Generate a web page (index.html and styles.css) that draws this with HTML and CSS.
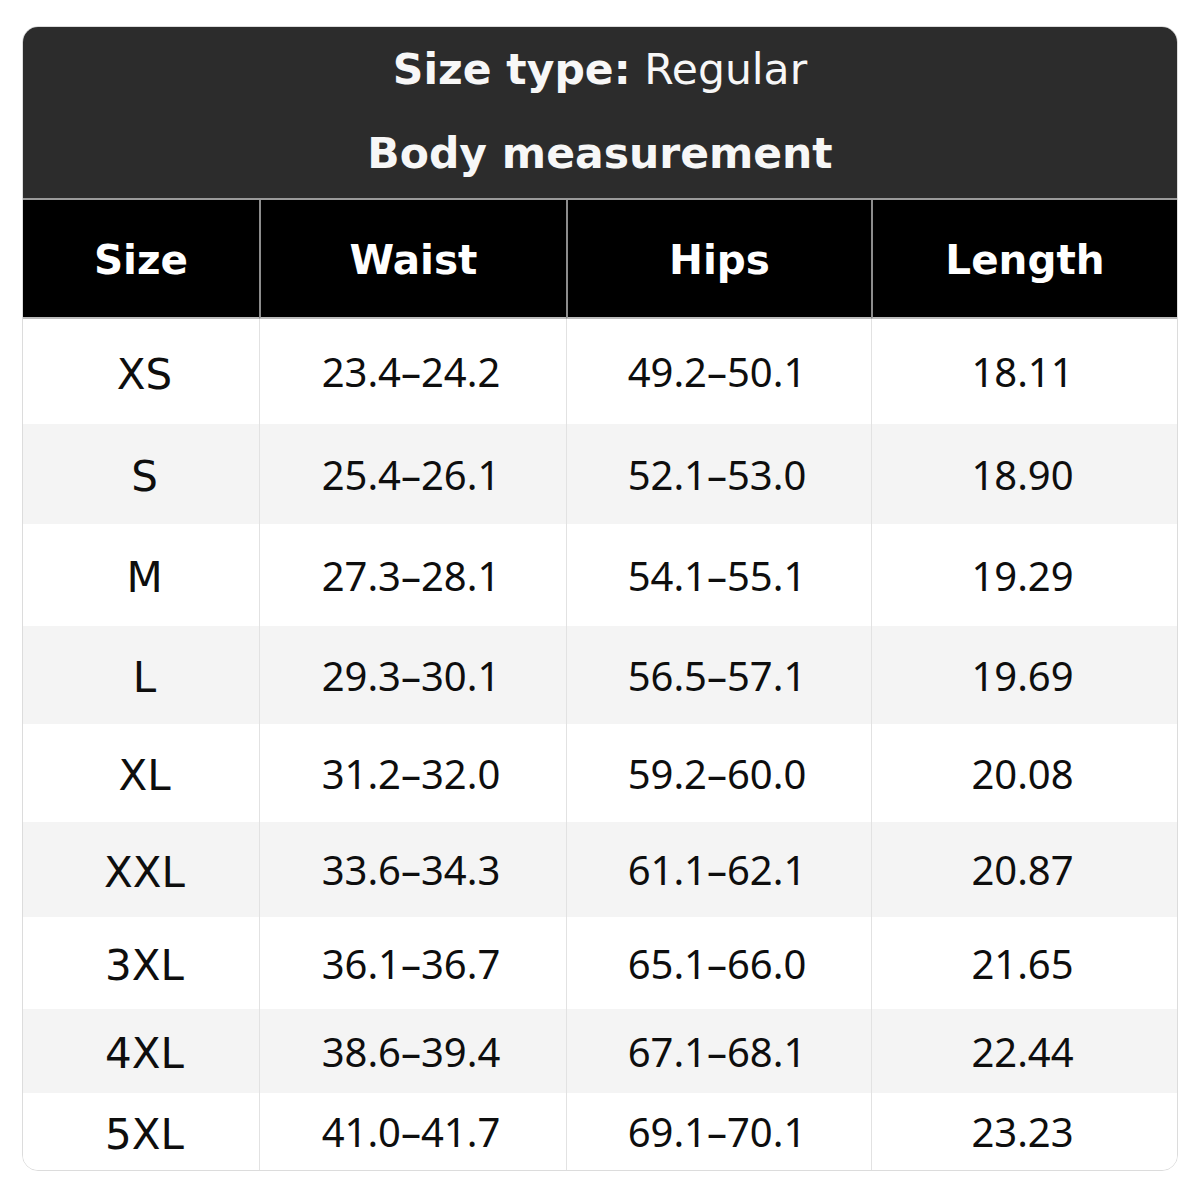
FILE: index.html
```html
<!DOCTYPE html>
<html lang="en">
<head>
<meta charset="utf-8">
<title>Size chart</title>
<link rel="stylesheet" href="styles.css">
</head>
<body>
<div class="chart">
  <div class="title">
    <div class="title-line"><b>Size type:</b> Regular</div>
    <div class="title-line"><b>Body measurement</b></div>
  </div>
  <div class="grid">
    <div class="hcell">Size</div>
    <div class="hcell">Waist</div>
    <div class="hcell">Hips</div>
    <div class="hcell">Length</div>

    <div class="cell size">XS</div><div class="cell">23.4–24.2</div><div class="cell">49.2–50.1</div><div class="cell">18.11</div>
    <div class="cell size alt">S</div><div class="cell alt">25.4–26.1</div><div class="cell alt">52.1–53.0</div><div class="cell alt">18.90</div>
    <div class="cell size">M</div><div class="cell">27.3–28.1</div><div class="cell">54.1–55.1</div><div class="cell">19.29</div>
    <div class="cell size alt">L</div><div class="cell alt">29.3–30.1</div><div class="cell alt">56.5–57.1</div><div class="cell alt">19.69</div>
    <div class="cell size">XL</div><div class="cell">31.2–32.0</div><div class="cell">59.2–60.0</div><div class="cell">20.08</div>
    <div class="cell size alt">XXL</div><div class="cell alt">33.6–34.3</div><div class="cell alt">61.1–62.1</div><div class="cell alt">20.87</div>
    <div class="cell size">3XL</div><div class="cell">36.1–36.7</div><div class="cell">65.1–66.0</div><div class="cell">21.65</div>
    <div class="cell size alt">4XL</div><div class="cell alt">38.6–39.4</div><div class="cell alt">67.1–68.1</div><div class="cell alt">22.44</div>
    <div class="cell size">5XL</div><div class="cell">41.0–41.7</div><div class="cell">69.1–70.1</div><div class="cell">23.23</div>
  </div>
</div>
</body>
</html>
```
FILE: styles.css
```css
html, body {
  margin: 0;
  padding: 0;
  background: #ffffff;
}

.chart {
  box-sizing: border-box;
  width: 1156px;
  margin: 26px 0 0 22px;
  border: 1px solid #dcdcdc;
  border-radius: 16px;
  overflow: hidden;
  background: #ffffff;
}

.title {
  background: #2c2c2c;
  color: #f7f7f7;
  height: 173px;
  display: flex;
  flex-direction: column;
  align-items: center;
  justify-content: center;
  gap: 54px;
  font-family: "DejaVu Sans", sans-serif;
  font-size: 42.5px;
  border-bottom: 2px solid #9a9a9a;
  box-sizing: border-box;
  padding-bottom: 2px;
}

.title-line {
  line-height: 30px;
}

.title b {
  font-weight: 700;
}

.grid {
  display: grid;
  grid-template-columns: 236px 307px 305px 1fr;
  grid-template-rows: 119px 105px 100px 102px 98px 98px 95px 92px 84px 77px;
}

.hcell {
  background: #000000;
  color: #ffffff;
  font-family: "DejaVu Sans", sans-serif;
  font-weight: 700;
  font-size: 40.5px;
  display: flex;
  align-items: center;
  justify-content: center;
  border-left: 2px solid #8c8c8c;
  border-bottom: 2px solid #bdbdbd;
  padding-top: 2px;
}

.hcell:first-child {
  border-left: none;
}

.cell {
  display: flex;
  align-items: center;
  justify-content: center;
  border-left: 1px solid #e2e2e2;
  color: #0e0e0e;
  font-family: "Noto Sans", sans-serif;
  font-size: 40px;
  background: #ffffff;
  padding-right: 4px;
}

.cell.size {
  border-left: none;
  font-family: "DejaVu Sans", sans-serif;
  font-size: 42px;
  padding-left: 7px;
  padding-right: 0;
  padding-top: 5px;
}

.cell.alt {
  background: #f4f4f4;
}
```
